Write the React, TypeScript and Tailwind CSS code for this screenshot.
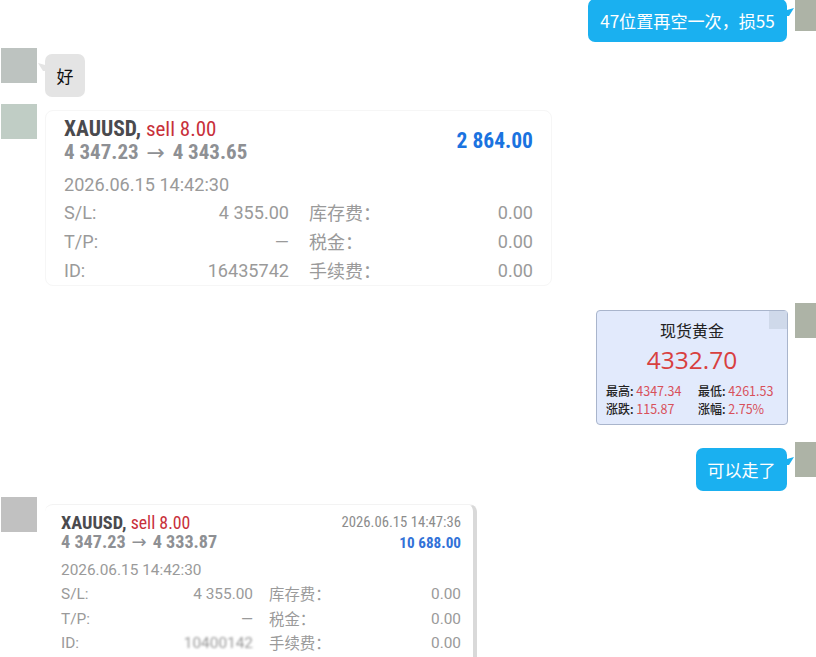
import type { ReactNode } from 'react';

const cjk = "font-['Noto_Sans_CJK_SC','Noto_Sans',sans-serif]";
const num = "font-['Roboto','Noto_Sans_CJK_SC',sans-serif]";
const narrow = "font-['Roboto_Condensed','Liberation_Sans_Narrow','Roboto',sans-serif]";

function Avatar({ color, side }: { color: string; side: 'left' | 'right' }) {
  return (
    <div
      className={`h-[35px] w-[36px] shrink-0 ${side === 'right' ? '-mr-[15px] ml-[8px]' : 'ml-[1px] mr-[8px]'}`}
      style={{ backgroundColor: color }}
    />
  );
}

function Tail({ color, side }: { color: string; side: 'left' | 'right' }) {
  return (
    <svg
      width="7"
      height="8"
      viewBox="0 0 7 8"
      className={`absolute top-[9px] ${side === 'right' ? '-right-[7px]' : '-left-[7px]'}`}
    >
      <path d={side === 'right' ? 'M0 2 L7 0 L2 8 L0 8 Z' : 'M7 2 L0 0 L5 8 L7 8 Z'} fill={color} />
    </svg>
  );
}

function BlueBubble({ children, className }: { children: ReactNode; className: string }) {
  return (
    <div
      className={`relative flex h-[43px] items-center justify-center rounded-[7px] bg-[#1ab0f0] text-[17.1px] text-white ${cjk} ${className}`}
    >
      {children}
      <Tail color="#1ab0f0" side="right" />
    </div>
  );
}

function TradeCard(props: {
  big: boolean;
  close: string;
  profit: string;
  closedAt?: string;
}) {
  const { big, close, profit, closedAt } = props;
  const rows = [
    ['S/L:', '4 355.00', '库存费：', '0.00'],
    ['T/P:', '—', '税金：', '0.00'],
    ['ID:', big ? '16435742' : '10400142', '手续费：', '0.00'],
  ];
  return (
    <div
      className={
        big
          ? 'mt-[6px] h-[176px] w-[507px] rounded-[8px] border border-[#f6f6f6] bg-white pl-[18px] pr-[18px] pt-[5px]'
          : 'mt-[7px] h-[170px] w-[432px] rounded-[8px] border-r-[4px] border-t border-[#f3f3f3] border-r-[#d9d9d9] bg-white pl-[16px] pr-[12px] pt-[7px]'
      }
    >
      <div className="flex justify-between">
        <div>
          <div className={`font-bold ${narrow} ${big ? 'text-[21.5px] leading-[25px]' : 'text-[18.3px] leading-[21px]'}`}>
            <span className="text-[#4a4a4e]">XAUUSD, </span>
            <span className={`font-normal text-[#c8303a] ${big ? 'text-[21px]' : 'text-[17.8px]'}`}>sell 8.00</span>
          </div>
          <div
            className={`flex items-center font-bold text-[#8e9094] ${narrow} ${
              big ? '-mt-[1px] h-[23px] text-[21px] leading-[23px]' : '-mt-[2px] h-[21px] text-[18.2px] leading-[21px]'
            }`}
          >
            <span>4 347.23</span>
            <span
              className={`text-center font-normal font-['DejaVu_Sans',sans-serif] ${
                big ? 'w-[34px] text-[22px]' : 'w-[27px] text-[18px]'
              }`}
            >
              →
            </span>
            <span>{close}</span>
          </div>
        </div>
        <div className="text-right">
          {closedAt && (
            <div className={`text-[14.7px] leading-[21px] text-[#8c8c8c] ${narrow}`}>{closedAt}</div>
          )}
          <div
            className={`font-bold ${narrow} ${
              big ? 'mt-[12px] text-[21.5px] leading-[25px] text-[#1a73e0]' : 'text-[15.2px] leading-[21px] text-[#3272d8]'
            }`}
          >
            {profit}
          </div>
        </div>
      </div>
      <div
        className={`text-[#9a9a9a] ${num} ${
          big ? 'mt-[7px] text-[18.1px] leading-[28px]' : 'mt-[4px] text-[15.4px] leading-[24px]'
        }`}
      >
        2026.06.15 14:42:30
      </div>
      <div>
        {rows.map((r) => (
          <div
            key={r[0]}
            className={`grid text-[#9a9a9a] ${num} ${
              big
                ? 'h-[28.8px] grid-cols-[225px_20px_1fr] text-[18.1px] leading-[28.8px]'
                : 'h-[24.5px] grid-cols-[192px_16px_1fr] text-[15.4px] leading-[24.5px]'
            }`}
          >
            <div className="flex justify-between">
              <span>{r[0]}</span>
              <span className={r[0] === 'ID:' && !big ? 'blur-[1px]' : ''}>{r[1]}</span>
            </div>
            <div />
            <div className="flex justify-between">
              <span className={`-translate-y-[1px] ${cjk} ${big ? 'text-[18px]' : 'text-[15.4px]'}`}>{r[2]}</span>
              <span>{r[3]}</span>
            </div>
          </div>
        ))}
      </div>
    </div>
  );
}

function GoldCard() {
  return (
    <div className="relative mt-[7px] h-[115px] w-[192px] rounded-[4px] border border-[#a9b5cc] bg-[#e2eafc] pt-[7px]">
      <div className="absolute right-0 top-0 h-[18px] w-[18px] bg-[#cfd9ea]" />
      <div className={`text-center text-[16px] leading-[24px] text-[#222] ${cjk}`}>现货黄金</div>
      <div className="mt-[1px] text-center font-['Open_Sans',sans-serif] text-[24.5px] leading-[34px] text-[#d8403f]">
        4332.70
      </div>
      <div className={`mt-[5px] grid grid-cols-[92px_1fr] pl-[9px] text-[12px] leading-[18px] ${cjk}`}>
        <div><span className="font-medium text-[#222]">最高:</span> <span className="text-[12.5px] text-[#d8505a]">4347.34</span></div>
        <div><span className="font-medium text-[#222]">最低:</span> <span className="text-[12.5px] text-[#d8505a]">4261.53</span></div>
        <div><span className="font-medium text-[#222]">涨跌:</span> <span className="text-[12.5px] text-[#d8505a]">115.87</span></div>
        <div><span className="font-medium text-[#222]">涨幅:</span> <span className="text-[12.5px] text-[#d8505a]">2.75%</span></div>
      </div>
    </div>
  );
}

export default function App() {
  return (
    <div className="h-[657px] w-[816px] overflow-hidden bg-white">
      <div className="-mt-[4px] flex flex-col">
        <div className="flex justify-end">
          <BlueBubble className="mt-[3px] w-[199px]">47位置再空一次，损55</BlueBubble>
          <Avatar color="#adb3a6" side="right" />
        </div>

        <div className="mt-[6px] flex">
          <Avatar color="#bdc3c0" side="left" />
          <div className={`relative mt-[6px] flex h-[43px] w-[40px] items-center justify-center rounded-[7px] bg-[#e4e4e4] text-[17px] text-[#111] ${cjk}`}>
            好
            <Tail color="#e4e4e4" side="left" />
          </div>
        </div>

        <div className="mt-[7px] flex">
          <Avatar color="#c0cdc5" side="left" />
          <TradeCard big close="4 343.65" profit="2 864.00" />
        </div>

        <div className="mt-[17px] flex justify-end">
          <div className="mr-[-1px]"><GoldCard /></div>
          <Avatar color="#adb3a6" side="right" />
        </div>

        <div className="mt-[17px] flex justify-end">
          <BlueBubble className="mt-[6px] w-[91px]">可以走了</BlueBubble>
          <Avatar color="#adb3a6" side="right" />
        </div>

        <div className="mt-[6px] flex">
          <Avatar color="#c1c1c1" side="left" />
          <TradeCard big={false} close="4 333.87" profit="10 688.00" closedAt="2026.06.15 14:47:36" />
        </div>
      </div>
    </div>
  );
}
